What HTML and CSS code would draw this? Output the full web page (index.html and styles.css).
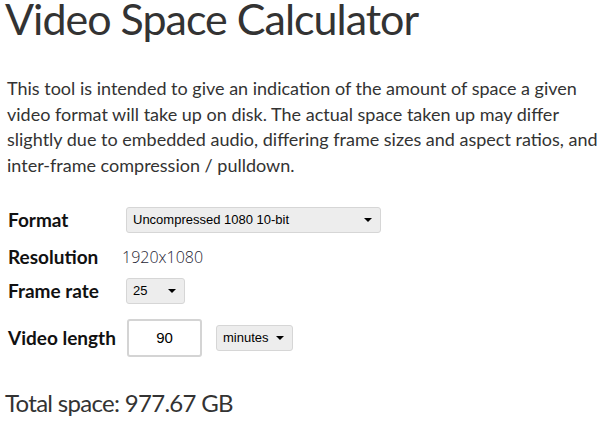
FILE: index.html
```html
<!DOCTYPE html>
<html lang="en">
<head>
    <meta charset="UTF-8">
    <meta name="viewport" content="width=device-width, initial-scale=1.0">
    <title>Video Space Calculator</title>
    <link rel="stylesheet" href="styles.css">
</head>
<body>
    <div class="container">
        <h1>Video Space Calculator</h1>
        <p class="intro">This tool is intended to give an indication of the amount of space a given video format will take up on disk. The actual space taken up may differ slightly due to embedded audio, differing frame sizes and aspect ratios, and inter-frame compression / pulldown.</p>

        <div class="calc">
            <div class="row row-format">
                <label for="format">Format</label>
                <div class="select format-select">
                    <span>Uncompressed 1080 10-bit</span>
                    <i class="caret"></i>
                </div>
            </div>
            <div class="row row-res">
                <label>Resolution</label>
                <span class="resolution">1920x1080</span>
            </div>
            <div class="row row-fps">
                <label for="fps">Frame rate</label>
                <div class="select fps-select">
                    <span>25</span>
                    <i class="caret"></i>
                </div>
            </div>
            <div class="row row-length">
                <label for="length">Video length</label>
                <div class="length">
                    <input type="text" id="length" value="90">
                    <div class="select unit-select">
                        <span>minutes</span>
                        <i class="caret"></i>
                    </div>
                </div>
            </div>
        </div>

        <div class="total">Total space: <span id="total">977.67 GB</span></div>
    </div>
</body>
</html>
```

FILE: styles.css
```css
body {
    font-family: 'Lato', sans-serif;
    background-color: #fff;
    color: #333;
    margin: 0;
    padding: 0;
}
.container {
    padding: 0 6px;
}
h1 {
    font-weight: 400;
    font-size: 43px;
    line-height: 44px;
    letter-spacing: -1px;
    margin: -3px 0 0 -1px;
    color: #333;
}
.intro {
    font-size: 18px;
    line-height: 25.7px;
    margin: 35px 0 22px 1px;
}
.calc {
    display: flex;
    flex-direction: column;
}
.row {
    display: grid;
    grid-template-columns: 120px auto;
    align-items: center;
    height: 36px;
}
.row-format {
    height: 38px;
}
.row-fps {
    height: 32px;
}
.row-length {
    height: 62px;
}
label {
    font-weight: bold;
    font-size: 19px;
    color: #111;
    padding-left: 2px;
}
.select {
    display: flex;
    align-items: center;
    justify-content: space-between;
    box-sizing: border-box;
    height: 26px;
    padding: 0 8px 0 6px;
    background: #ededed;
    border: 1px solid #d6d6d6;
    border-radius: 3px;
    font-family: 'Liberation Sans', Arial, sans-serif;
    font-size: 13px;
    color: #000;
}
.format-select {
    width: 255px;
}
.fps-select {
    width: 59px;
}
.unit-select {
    width: 77px;
}
.caret {
    width: 0;
    height: 0;
    border-left: 4px solid transparent;
    border-right: 4px solid transparent;
    border-top: 4px solid #000;
}
.resolution {
    font-family: 'Open Sans', sans-serif;
    font-weight: 300;
    font-size: 16px;
    color: #1e2433;
    margin-left: -4px;
}
.length {
    display: flex;
    align-items: center;
    gap: 14px;
}
.length input {
    box-sizing: border-box;
    width: 75px;
    height: 38px;
    margin-left: 1px;
    border: 2px solid #d4d4d4;
    border-radius: 3px;
    text-align: center;
    font-family: 'Liberation Sans', Arial, sans-serif;
    font-size: 15px;
    color: #000;
    outline: none;
}
.total {
    font-size: 24px;
    letter-spacing: -0.7px;
    margin-top: 19px;
    margin-left: -1px;
    color: #333;
}
```
